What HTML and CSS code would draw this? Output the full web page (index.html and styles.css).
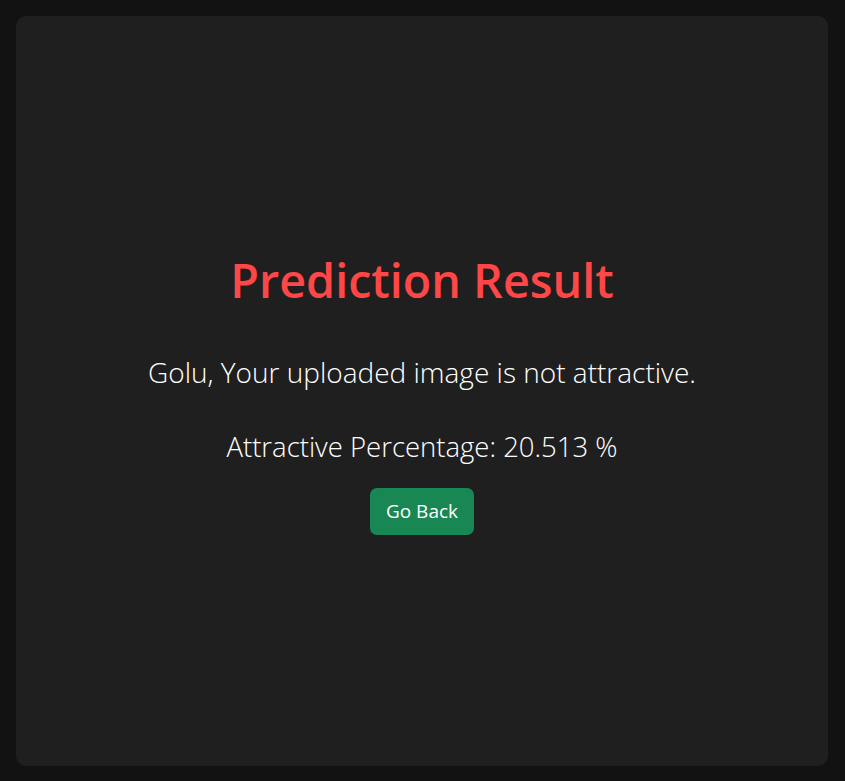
FILE: index.html
```html
<!DOCTYPE html>
<html lang="en">
<head>
<meta charset="utf-8">
<title>Prediction Result</title>
<link rel="stylesheet" href="styles.css">
</head>
<body>
<main class="card">
  <h1 class="title">Prediction Result</h1>
  <p class="message">Golu, Your uploaded image is not attractive.</p>
  <p class="percentage">Attractive Percentage: 20.513 %</p>
  <a class="btn-back" href="#">Go Back</a>
</main>
</body>
</html>
```

FILE: styles.css
```css
html, body {
  margin: 0;
  padding: 0;
  background: #121212;
  height: 100%;
}
body {
  padding: 16px 16px 15px 16px;
  box-sizing: border-box;
  font-family: "Open Sans", "Noto Sans", "Liberation Sans", sans-serif;
  color: #ffffff;
}
.card {
  box-sizing: border-box;
  height: 750px;
  width: 812px;
  background: #1f1f1f;
  border-radius: 10px;
  display: flex;
  flex-direction: column;
  align-items: center;
  justify-content: center;
  text-align: center;
}
.title {
  margin: 4px 0 42px;
  font-size: 46.7px;
  line-height: 58px;
  font-weight: 600;
  color: #ff4747;
}
.message {
  margin: 0 0 33px;
  font-size: 28px;
  line-height: 42px;
  font-weight: 300;
}
.percentage {
  margin: 0 0 20px;
  font-size: 27.5px;
  line-height: 42px;
  font-weight: 300;
}
.btn-back {
  display: inline-block;
  width: 104px;
  height: 47px;
  box-sizing: border-box;
  line-height: 47px;
  background: #198754;
  color: #ffffff;
  border-radius: 7px;
  text-decoration: none;
  font-size: 19px;
  font-weight: 400;
}
```
